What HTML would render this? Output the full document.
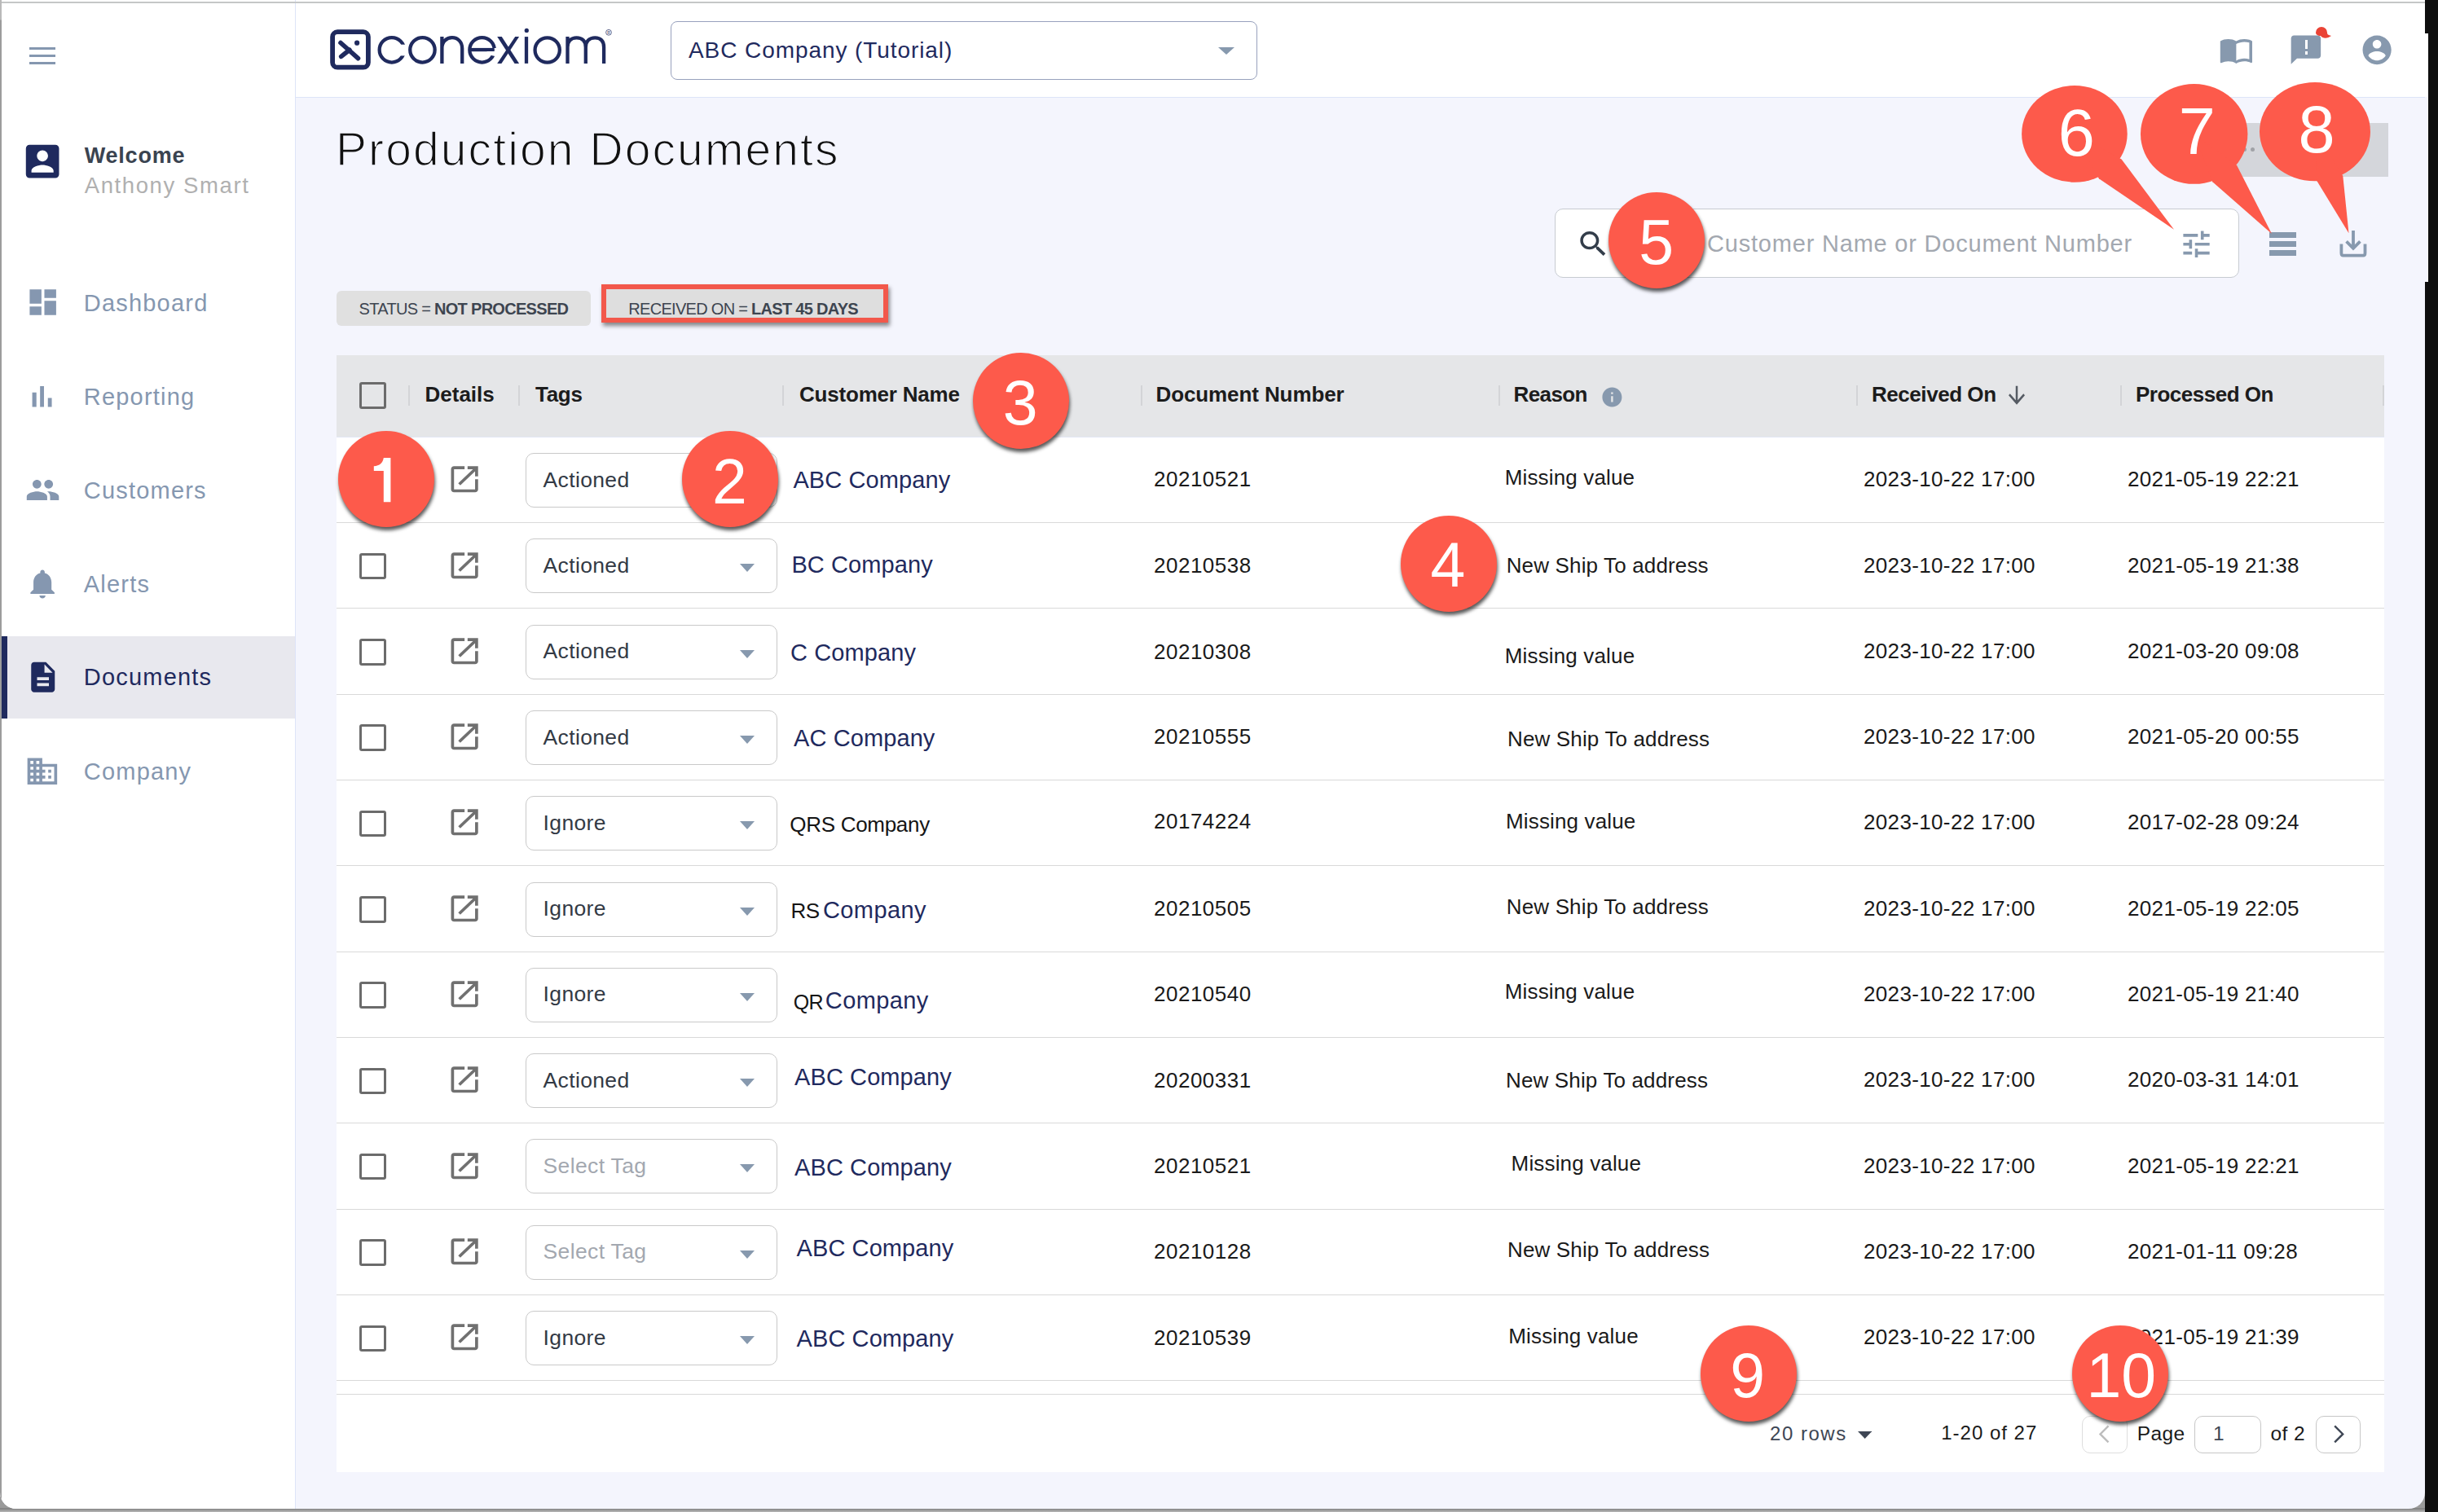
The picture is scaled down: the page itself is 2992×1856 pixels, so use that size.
<!DOCTYPE html>
<html><head><meta charset="utf-8"><style>
html,body{margin:0;padding:0;width:2992px;height:1856px;overflow:hidden;background:#0e0e0e}
body{position:relative;font-family:"Liberation Sans", sans-serif}
.t{position:absolute;white-space:nowrap;line-height:1}
svg{display:block}
#win{position:absolute;left:0;top:0;width:2976px;height:1852px;background:#f4f5fd;border-radius:0 0 20px 20px;overflow:hidden}
</style></head><body>
<div style="position:absolute;left:0;top:1820px;width:2976px;height:36px;background:linear-gradient(#9a9a9a 0%,#9a9a9a 85%,#7f7f7f 88%,#b8b8b8 100%)"></div>
<div style="position:absolute;left:2976px;top:41px;width:4px;height:305px;background:#fff"></div>
<div style="position:absolute;left:2976px;top:119px;width:3px;height:227px;background:#f4f5fd"></div>
<div id="win">
<div style="position:absolute;left:362.0px;top:0.0px;width:2614.0px;height:119.0px;background:#fff;border-bottom:1.2px solid #dde4f8"></div><div style="position:absolute;left:0.0px;top:0.0px;width:362.0px;height:1852.0px;background:#fff;border-right:1.2px solid #dde4f8"></div><div style="position:absolute;left:2.0px;top:2.0px;width:2974.0px;height:2.0px;background:#c5c7c7"></div><div style="position:absolute;left:0.0px;top:0.0px;width:2.0px;height:1852.0px;background:linear-gradient(#b9b9b9 0px,#b9b9b9 24px,#9c9c9c 25px,#9c9c9c 100%)"></div><div style="position:absolute;left:36.0px;top:58.0px;width:32.4px;height:3.0px;background:#8597b0"></div><div style="position:absolute;left:36.0px;top:67.0px;width:32.4px;height:3.0px;background:#8597b0"></div><div style="position:absolute;left:36.0px;top:76.0px;width:32.4px;height:3.0px;background:#8597b0"></div><svg style="position:absolute;left:25.22px;top:171.22px;overflow:visible" width="54.27" height="54.27" viewBox="0 0 24 24" preserveAspectRatio="none"><path fill="#1f2a5e" d="M3 5v14c0 1.1.89 2 2 2h14c1.1 0 2-.9 2-2V5c0-1.1-.9-2-2-2H5c-1.11 0-2 .9-2 2zm12 4c0 1.66-1.34 3-3 3s-3-1.34-3-3 1.34-3 3-3 3 1.34 3 3zm-9 8c0-2 4-3.1 6-3.1s6 1.1 6 3.1v1H6v-1z"/></svg><div class="t" style="left:103.7px;top:177.7px;font-size:27px;color:#3a4350;font-weight:700;letter-spacing:0.8px;">Welcome</div><div class="t" style="left:103.7px;top:213.7px;font-size:27.5px;color:#b0b0b0;font-weight:400;letter-spacing:1.6px;">Anthony Smart</div><div style="position:absolute;left:2.0px;top:781.0px;width:360.0px;height:101.0px;background:#e8e8ee"></div><div style="position:absolute;left:2.0px;top:781.0px;width:7.0px;height:101.0px;background:#1f2a5e"></div><svg style="position:absolute;left:30.58px;top:350.37px;overflow:visible" width="43.33" height="41.87" viewBox="0 0 24 24" preserveAspectRatio="none"><path fill="#8597b0" d="M3 13h8V3H3v10zm0 8h8v-6H3v6zm10 0h8V11h-8v10zm0-18v6h8V3h-8z"/></svg><div class="t" style="left:102.8px;top:358.0px;font-size:29px;color:#8597b0;font-weight:400;letter-spacing:1.2px;">Dashboard</div><svg style="position:absolute;left:31.43px;top:464.53px;overflow:visible" width="41.14" height="43.54" viewBox="0 0 24 24" preserveAspectRatio="none"><path fill="#8597b0" d="M5 9.2h3V19H5zM10.6 5h2.8v14h-2.8zm5.6 8H19v6h-2.8z"/></svg><div class="t" style="left:102.8px;top:473.3px;font-size:29px;color:#8597b0;font-weight:400;letter-spacing:1.2px;">Reporting</div><svg style="position:absolute;left:30.70px;top:580.07px;overflow:visible" width="43.09" height="42.86" viewBox="0 0 24 24" preserveAspectRatio="none"><path fill="#8597b0" d="M16 11c1.66 0 2.99-1.34 2.99-3S17.66 5 16 5c-1.66 0-3 1.34-3 3s1.34 3 3 3zm-8 0c1.66 0 2.99-1.34 2.99-3S9.66 5 8 5C6.34 5 5 6.34 5 8s1.34 3 3 3zm0 2c-2.33 0-7 1.17-7 3.5V19h14v-2.5c0-2.33-4.67-3.5-7-3.5zm8 0c-.29 0-.62.02-.97.05 1.16.84 1.970 1.97 1.97 3.45V19h6v-2.5c0-2.33-4.67-3.5-7-3.5z"/></svg><div class="t" style="left:102.8px;top:588.1px;font-size:29px;color:#8597b0;font-weight:400;letter-spacing:1.2px;">Customers</div><svg style="position:absolute;left:30.12px;top:694.51px;overflow:visible" width="44.25" height="43.08" viewBox="0 0 24 24" preserveAspectRatio="none"><path fill="#8597b0" d="M12 22c1.1 0 2-.9 2-2h-4c0 1.1.89 2 2 2zm6-6v-5c0-3.07-1.64-5.64-4.5-6.32V4c0-.83-.67-1.5-1.5-1.5s-1.5.67-1.5 1.5v.68C7.63 5.36 6 7.92 6 11v5l-2 2v1h16v-1l-2-2z"/></svg><div class="t" style="left:102.8px;top:702.5px;font-size:29px;color:#8597b0;font-weight:400;letter-spacing:1.2px;">Alerts</div><svg style="position:absolute;left:30.75px;top:809.30px;overflow:visible" width="43.50" height="44.40" viewBox="0 0 24 24" preserveAspectRatio="none"><path fill="#1f2a5e" d="M14 2H6c-1.1 0-1.99.9-1.99 2L4 20c0 1.1.89 2 1.99 2H18c1.1 0 2-.9 2-2V8l-6-6zm2 16H8v-2h8v2zm0-4H8v-2h8v2zm-3-5V3.5L18.5 9H13z"/></svg><div class="t" style="left:102.8px;top:817.2px;font-size:29px;color:#1f2a5e;font-weight:400;letter-spacing:1.2px;">Documents</div><svg style="position:absolute;left:30.35px;top:925.08px;overflow:visible" width="43.80" height="43.33" viewBox="0 0 24 24" preserveAspectRatio="none"><path fill="#8597b0" d="M12 7V3H2v18h20V7H12zM6 19H4v-2h2v2zm0-4H4v-2h2v2zm0-4H4V9h2v2zm0-4H4V5h2v2zm4 12H8v-2h2v2zm0-4H8v-2h2v2zm0-4H8V9h2v2zm0-4H8V5h2v2zm10 12h-8v-2h2v-2h-2v-2h2v-2h-2V9h8v10zm-2-8h-2v2h2v-2zm0 4h-2v2h2v-2z"/></svg><div class="t" style="left:102.8px;top:933.0px;font-size:29px;color:#8597b0;font-weight:400;letter-spacing:1.2px;">Company</div><svg style="position:absolute;left:400px;top:30px" width="360" height="60" viewBox="400 30 360 60">
<g fill="none" stroke="#1f2a5e">
<rect x="408.1" y="39.2" width="43.8" height="43.5" rx="6" stroke-width="5.8"/>
<g stroke-linecap="round" stroke-width="5.6"><line x1="418" y1="52.5" x2="439.5" y2="71.7"/><line x1="418.7" y1="69.4" x2="428.9" y2="61.2"/></g>
<g stroke-width="4.3">
<circle cx="480.85" cy="61.35" r="15.2"/>
<circle cx="518.45" cy="61.35" r="15.2"/>
<path d="M542.4 78 V45.1 M542.4 59 C542.4 51 548 46.2 554.9 46.2 C562 46.2 567.2 51.5 567.2 59.5 V78"/>
<circle cx="591.55" cy="61.35" r="15.2"/>
<path d="M576 61.05 H607"/>
<path d="M646 45.1 V77.9"/>
<circle cx="671.7" cy="61.5" r="15.15"/>
<path d="M696.5 77.9 V45.1 M696.5 58 C696.5 50.5 701 46.3 707.6 46.3 C714.5 46.3 718.8 50.5 718.8 58 V77.9 M718.8 58 C718.8 50.5 723.5 46.3 730.3 46.3 C737 46.3 741.1 50.5 741.1 58 V77.9"/>
</g></g>
<rect x="489" y="54.7" width="12" height="13.7" fill="#fff"/>
<path d="M597 62.9 H612 V70 L603 68 Z" fill="#fff"/>
<rect x="606" y="59" width="4" height="4" fill="#fff"/>
<path d="M576.5 59.2 H606.8 V62.9 H576.5Z" fill="#1f2a5e"/>
<g fill="#1f2a5e">
<path d="M610.2 45.1 H615.75 L637.1 77.9 H631.6Z"/>
<path d="M632.2 45.1 H637.1 L615.4 77.9 H610.2Z"/>
<circle cx="438.1" cy="52.7" r="3.1"/>
<circle cx="646.3" cy="37.4" r="2.6"/>
</g>
<circle cx="747" cy="39.8" r="3.4" fill="none" stroke="#1f2a5e" stroke-width="0.7"/>
<text x="747" y="41.6" font-size="5" text-anchor="middle" fill="#1f2a5e" font-family="Liberation Sans">R</text>
</svg><div style="position:absolute;left:823.0px;top:26.0px;width:720.0px;height:71.5px;box-sizing:border-box;background:#fff;border:1.5px solid #98a1bd;border-radius:8px"></div><div class="t" style="left:845.0px;top:48.1px;font-size:28px;color:#1f2a5e;font-weight:400;letter-spacing:0.92px;">ABC Company (Tutorial)</div><svg style="position:absolute;left:1495px;top:58px" width="20" height="9" viewBox="0 0 20 9"><path d="M0 0H20L10 9z" fill="#8799ae"/></svg><svg style="position:absolute;left:2723.02px;top:40.06px;overflow:visible" width="42.76" height="42.35" viewBox="0 0 24 24" preserveAspectRatio="none"><path fill="#8799ae" d="M21 5c-1.11-.35-2.33-.5-3.5-.5-1.95 0-4.050.4-5.5 1.5-1.45-1.1-3.55-1.5-5.5-1.5S2.45 4.9 1 6v14.65c0 .25.25.5.5.5.1 0 .15-.05.25-.05C3.1 20.45 5.05 20 6.5 20c1.95 0 4.05.4 5.5 1.5 1.35-.85 3.8-1.5 5.5-1.5 1.65 0 3.35.3 4.75 1.05.1.05.15.05.25.05.25 0 .5-.25.5-.5V6c-.6-.45-1.25-.75-2-1zm0 13.5c-1.1-.35-2.3-.5-3.5-.5-1.7 0-4.15.65-5.5 1.5V8c1.35-.85 3.8-1.5 5.5-1.5 1.2 0 2.4.15 3.5.5v11.5z"/></svg><svg style="position:absolute;left:2808.35px;top:39.87px;overflow:visible" width="43.80" height="42.36" viewBox="0 0 24 24" preserveAspectRatio="none"><path fill="#8799ae" d="M20 2H4c-1.1 0-1.99.9-1.99 2L2 22l4-4h14c1.1 0 2-.9 2-2V4c0-1.1-.9-2-2-2zm-7 12h-2v-2h2v2zm0-4h-2V6h2v4z"/></svg><div style="position:absolute;left:2826.0px;top:48.0px;width:9.0px;height:20.0px;background:#8799ae"></div><div style="position:absolute;left:2828.8px;top:49.3px;width:3.7px;height:10.8px;background:#fff"></div><div style="position:absolute;left:2828.8px;top:63.0px;width:3.7px;height:3.7px;background:#fff"></div><svg style="position:absolute;left:2838px;top:31.5px" width="24" height="22" viewBox="0 0 24 22"><path fill="#ea4335" d="M4 8a7 7 0 0 1 14 0 c0 2 1 3 5 4 c-4 3 -10 4 -13 0 c-4 0 -6 -2 -6 -4z"/></svg><svg style="position:absolute;left:2896.28px;top:40.14px;overflow:visible" width="42.24" height="42.72" viewBox="0 0 24 24" preserveAspectRatio="none"><path fill="#8799ae" d="M12 2C6.48 2 2 6.48 2 12s4.48 10 10 10 10-4.48 10-10S17.52 2 12 2zm0 3c1.66 0 3 1.34 3 3s-1.34 3-3 3-3-1.34-3-3 1.34-3 3-3zm0 14.2c-2.5 0-4.71-1.28-6-3.22.03-1.99 4-3.08 6-3.08 1.99 0 5.97 1.09 6 3.08-1.29 1.94-3.5 3.22-6 3.22z"/></svg><div class="t" style="left:412.0px;top:154.7px;font-size:57px;color:#111;font-weight:400;letter-spacing:2.1px;-webkit-text-stroke:1.5px #f4f5fd">Production Documents</div><div style="position:absolute;left:2745.0px;top:151.0px;width:186.0px;height:66.0px;background:#d4d6db"></div><div style="position:absolute;left:2752px;top:181px;width:5px;height:5px;border-radius:50%;background:#a0a2a7"></div><div style="position:absolute;left:2762px;top:181px;width:5px;height:5px;border-radius:50%;background:#a0a2a7"></div><div style="position:absolute;left:1908.4px;top:255.8px;width:840.0px;height:85.7px;box-sizing:border-box;background:#fff;border:1.5px solid #c7cbd1;border-radius:10px"></div><svg style="position:absolute;left:1933.68px;top:278.89px;overflow:visible" width="42.54" height="40.89" viewBox="0 0 24 24" preserveAspectRatio="none"><path fill="#333d4a" d="M15.5 14h-.79l-.28-.27C15.41 12.59 16 11.11 16 9.5 16 5.91 13.09 3 9.5 3S3 5.91 3 9.5 5.91 16 9.5 16c1.61 0 3.090-.59 4.23-1.57l.27.28v.79l5 4.99L20.49 19l-4.99-5zm-6 0C7.01 14 5 11.99 5 9.5S7.01 5 9.5 5 14 7.01 14 9.5 11.99 14 9.5 14z"/></svg><div class="t" style="left:2095.0px;top:284.5px;font-size:29px;color:#a3a8b0;font-weight:400;letter-spacing:0.8px;">Customer Name or Document Number</div><svg style="position:absolute;left:2673.82px;top:277.57px;overflow:visible" width="43.07" height="43.47" viewBox="0 0 24 24" preserveAspectRatio="none"><path fill="#8799ae" d="M3 17v2h6v-2H3zM3 5v2h10V5H3zm10 16v-2h8v-2h-8v-2h-2v6h2zM7 9v2H3v2h4v2h2V9H7zm14 4v-2H11v2h10zm-6-4h2V7h4V5h-4V3h-2v6z"/></svg><div style="position:absolute;left:2785.0px;top:285.2px;width:32.6px;height:6.7px;background:#8799ae"></div><div style="position:absolute;left:2785.0px;top:296.0px;width:32.6px;height:6.7px;background:#8799ae"></div><div style="position:absolute;left:2785.0px;top:307.0px;width:32.6px;height:6.7px;background:#8799ae"></div><svg style="position:absolute;left:2868px;top:280px" width="40" height="40" viewBox="2868 280 40 40"><g fill="none" stroke="#8799ae" stroke-width="3.8"><path d="M2888 283 V303.5"/><path d="M2879.6 296.4 L2888 304.8 L2896.4 296.4"/><path d="M2873.4 299.5 V310.5 Q2873.4 313.7 2875.6 313.7 H2900.3 Q2902.5 313.7 2902.5 310.5 V299.5"/></g></svg><div style="position:absolute;left:413.0px;top:357.0px;width:311.8px;height:43.0px;background:#e0e0e0;border-radius:6px"></div><div class="t" style="left:440.6px;top:368.7px;font-size:20px;color:#3d4550;font-weight:400;letter-spacing:-0.7px;">STATUS = <b>NOT PROCESSED</b></div><div style="position:absolute;left:738.0px;top:349.4px;width:351.7px;height:46.8px;box-sizing:border-box;background:#dedede;border:6px solid #f2584b;box-shadow:2px 4px 5px rgba(0,0,0,0.45)"></div><div class="t" style="left:771.3px;top:368.7px;font-size:20px;color:#3d4550;font-weight:400;letter-spacing:-0.7px;">RECEIVED ON = <b>LAST 45 DAYS</b></div><div style="position:absolute;left:413.0px;top:436.0px;width:2513.0px;height:1371.0px;background:#fff"></div><div style="position:absolute;left:413.0px;top:436.0px;width:2513.0px;height:101.0px;background:#e5e6e8"></div><div style="position:absolute;left:413.0px;top:536.0px;width:2513.0px;height:1.0px;background:#e2e6f4"></div><div style="position:absolute;left:441.0px;top:469.0px;width:32.5px;height:32.5px;box-sizing:border-box;border:3.6px solid #6b6b6b;border-radius:3px"></div><div style="position:absolute;left:500.7px;top:473.0px;width:2.0px;height:25.0px;background:#d3d4d7"></div><div style="position:absolute;left:636.0px;top:473.0px;width:2.0px;height:25.0px;background:#d3d4d7"></div><div style="position:absolute;left:960.0px;top:473.0px;width:2.0px;height:25.0px;background:#d3d4d7"></div><div style="position:absolute;left:1399.5px;top:473.0px;width:2.0px;height:25.0px;background:#d3d4d7"></div><div style="position:absolute;left:1839.0px;top:473.0px;width:2.0px;height:25.0px;background:#d3d4d7"></div><div style="position:absolute;left:2277.5px;top:473.0px;width:2.0px;height:25.0px;background:#d3d4d7"></div><div style="position:absolute;left:2602.4px;top:473.0px;width:2.0px;height:25.0px;background:#d3d4d7"></div><div style="position:absolute;left:2924.0px;top:473.0px;width:2.0px;height:25.0px;background:#d3d4d7"></div><div class="t" style="left:521.5px;top:471.4px;font-size:26px;color:#1c1c1c;font-weight:700;letter-spacing:0px;">Details</div><div class="t" style="left:657.0px;top:471.4px;font-size:26px;color:#1c1c1c;font-weight:700;letter-spacing:-0.3px;">Tags</div><div class="t" style="left:981.0px;top:471.4px;font-size:26px;color:#1c1c1c;font-weight:700;letter-spacing:-0.2px;">Customer Name</div><div class="t" style="left:1418.5px;top:471.4px;font-size:26px;color:#1c1c1c;font-weight:700;letter-spacing:-0.1px;">Document Number</div><div class="t" style="left:1857.5px;top:471.4px;font-size:26px;color:#1c1c1c;font-weight:700;letter-spacing:-0.6px;">Reason</div><div class="t" style="left:2297.0px;top:471.4px;font-size:26px;color:#1c1c1c;font-weight:700;letter-spacing:-0.45px;">Received On</div><div class="t" style="left:2621.0px;top:471.4px;font-size:26px;color:#1c1c1c;font-weight:700;letter-spacing:-0.5px;">Processed On</div><svg style="position:absolute;left:1963.60px;top:472.60px;overflow:visible" width="28.80" height="28.80" viewBox="0 0 24 24" preserveAspectRatio="none"><path fill="#8799ae" d="M12 2C6.48 2 2 6.48 2 12s4.48 10 10 10 10-4.48 10-10S17.52 2 12 2zm1 15h-2v-6h2v6zm0-8h-2V7h2v2z"/></svg><svg style="position:absolute;left:2460.00px;top:468.25px;overflow:visible" width="30.00" height="34.50" viewBox="0 0 24 24" preserveAspectRatio="none"><path fill="#555b63" d="M20 12l-1.41-1.41L13 16.17V4h-2v12.17l-5.58-5.59L4 12l8 8 8-8z"/></svg><div style="position:absolute;left:413.0px;top:641.0px;width:2513.0px;height:1.0px;background:#d9d9d9"></div><div style="position:absolute;left:441.0px;top:573.5px;width:32.5px;height:32.5px;box-sizing:border-box;border:3.6px solid #6b6b6b;border-radius:3px"></div><svg style="position:absolute;left:548.27px;top:567.27px;overflow:visible" width="44.27" height="42.67" viewBox="0 0 24 24" preserveAspectRatio="none"><path fill="#707070" d="M19 19H5V5h7V3H5c-1.11 0-2 .9-2 2v14c0 1.1.89 2 2 2h14c1.1 0 2-.9 2-2v-7h-2v7zM14 3v2h3.59l-9.83 9.830 1.41 1.41L19 6.41V10h2V3h-7z"/></svg><div style="position:absolute;left:645.0px;top:556.0px;width:308.7px;height:67.0px;box-sizing:border-box;background:#fff;border:1.5px solid #c9c9c9;border-radius:10px"></div><div class="t" style="left:666.6px;top:575.6px;font-size:26.5px;color:#333a45;font-weight:400;letter-spacing:0.35px;">Actioned</div><svg style="position:absolute;left:907.8px;top:587.0px" width="18" height="10" viewBox="0 0 18 10"><path d="M0 0H18L9 10z" fill="#8799ae"/></svg><div class="t" style="left:973.4px;top:574.5px;font-size:29px;color:#1f2a5e;font-weight:400;letter-spacing:0.1px;">ABC Company</div><div class="t" style="left:1416.0px;top:574.7px;font-size:26px;color:#1a1a1a;font-weight:400;letter-spacing:0.5px;">20210521</div><div class="t" style="left:1846.7px;top:573.2px;font-size:26px;color:#1a1a1a;font-weight:400;letter-spacing:0.15px;">Missing value</div><div class="t" style="left:2287.0px;top:575.2px;font-size:26px;color:#1a1a1a;font-weight:400;letter-spacing:0.35px;">2023-10-22 17:00</div><div class="t" style="left:2611.0px;top:575.2px;font-size:26px;color:#1a1a1a;font-weight:400;letter-spacing:0.35px;">2021-05-19 22:21</div><div style="position:absolute;left:413.0px;top:746.0px;width:2513.0px;height:1.0px;background:#d9d9d9"></div><div style="position:absolute;left:441.0px;top:678.8px;width:32.5px;height:32.5px;box-sizing:border-box;border:3.6px solid #6b6b6b;border-radius:3px"></div><svg style="position:absolute;left:548.27px;top:672.57px;overflow:visible" width="44.27" height="42.67" viewBox="0 0 24 24" preserveAspectRatio="none"><path fill="#707070" d="M19 19H5V5h7V3H5c-1.11 0-2 .9-2 2v14c0 1.1.89 2 2 2h14c1.1 0 2-.9 2-2v-7h-2v7zM14 3v2h3.59l-9.83 9.830 1.41 1.41L19 6.41V10h2V3h-7z"/></svg><div style="position:absolute;left:645.0px;top:661.3px;width:308.7px;height:67.0px;box-sizing:border-box;background:#fff;border:1.5px solid #c9c9c9;border-radius:10px"></div><div class="t" style="left:666.6px;top:680.9px;font-size:26.5px;color:#333a45;font-weight:400;letter-spacing:0.35px;">Actioned</div><svg style="position:absolute;left:907.8px;top:692.3px" width="18" height="10" viewBox="0 0 18 10"><path d="M0 0H18L9 10z" fill="#8799ae"/></svg><div class="t" style="left:971.4px;top:679.3px;font-size:29px;color:#1f2a5e;font-weight:400;letter-spacing:0.1px;">BC Company</div><div class="t" style="left:1416.0px;top:680.5px;font-size:26px;color:#1a1a1a;font-weight:400;letter-spacing:0.5px;">20210538</div><div class="t" style="left:1848.7px;top:680.5px;font-size:26px;color:#1a1a1a;font-weight:400;letter-spacing:0.15px;">New Ship To address</div><div class="t" style="left:2287.0px;top:680.5px;font-size:26px;color:#1a1a1a;font-weight:400;letter-spacing:0.35px;">2023-10-22 17:00</div><div class="t" style="left:2611.0px;top:680.5px;font-size:26px;color:#1a1a1a;font-weight:400;letter-spacing:0.35px;">2021-05-19 21:38</div><div style="position:absolute;left:413.0px;top:852.0px;width:2513.0px;height:1.0px;background:#d9d9d9"></div><div style="position:absolute;left:441.0px;top:784.1px;width:32.5px;height:32.5px;box-sizing:border-box;border:3.6px solid #6b6b6b;border-radius:3px"></div><svg style="position:absolute;left:548.27px;top:777.87px;overflow:visible" width="44.27" height="42.67" viewBox="0 0 24 24" preserveAspectRatio="none"><path fill="#707070" d="M19 19H5V5h7V3H5c-1.11 0-2 .9-2 2v14c0 1.1.89 2 2 2h14c1.1 0 2-.9 2-2v-7h-2v7zM14 3v2h3.59l-9.83 9.830 1.41 1.41L19 6.41V10h2V3h-7z"/></svg><div style="position:absolute;left:645.0px;top:766.6px;width:308.7px;height:67.0px;box-sizing:border-box;background:#fff;border:1.5px solid #c9c9c9;border-radius:10px"></div><div class="t" style="left:666.6px;top:786.2px;font-size:26.5px;color:#333a45;font-weight:400;letter-spacing:0.35px;">Actioned</div><svg style="position:absolute;left:907.8px;top:797.6px" width="18" height="10" viewBox="0 0 18 10"><path d="M0 0H18L9 10z" fill="#8799ae"/></svg><div class="t" style="left:970.0px;top:786.8px;font-size:29px;color:#1f2a5e;font-weight:400;letter-spacing:0.1px;">C Company</div><div class="t" style="left:1416.0px;top:787.3px;font-size:26px;color:#1a1a1a;font-weight:400;letter-spacing:0.5px;">20210308</div><div class="t" style="left:1846.8px;top:791.8px;font-size:26px;color:#1a1a1a;font-weight:400;letter-spacing:0.15px;">Missing value</div><div class="t" style="left:2287.0px;top:785.8px;font-size:26px;color:#1a1a1a;font-weight:400;letter-spacing:0.35px;">2023-10-22 17:00</div><div class="t" style="left:2611.0px;top:785.8px;font-size:26px;color:#1a1a1a;font-weight:400;letter-spacing:0.35px;">2021-03-20 09:08</div><div style="position:absolute;left:413.0px;top:957.0px;width:2513.0px;height:1.0px;background:#d9d9d9"></div><div style="position:absolute;left:441.0px;top:889.4px;width:32.5px;height:32.5px;box-sizing:border-box;border:3.6px solid #6b6b6b;border-radius:3px"></div><svg style="position:absolute;left:548.27px;top:883.17px;overflow:visible" width="44.27" height="42.67" viewBox="0 0 24 24" preserveAspectRatio="none"><path fill="#707070" d="M19 19H5V5h7V3H5c-1.11 0-2 .9-2 2v14c0 1.1.89 2 2 2h14c1.1 0 2-.9 2-2v-7h-2v7zM14 3v2h3.59l-9.83 9.830 1.41 1.41L19 6.41V10h2V3h-7z"/></svg><div style="position:absolute;left:645.0px;top:871.9px;width:308.7px;height:67.0px;box-sizing:border-box;background:#fff;border:1.5px solid #c9c9c9;border-radius:10px"></div><div class="t" style="left:666.6px;top:891.5px;font-size:26.5px;color:#333a45;font-weight:400;letter-spacing:0.35px;">Actioned</div><svg style="position:absolute;left:907.8px;top:902.9px" width="18" height="10" viewBox="0 0 18 10"><path d="M0 0H18L9 10z" fill="#8799ae"/></svg><div class="t" style="left:974.0px;top:891.9px;font-size:29px;color:#1f2a5e;font-weight:400;letter-spacing:0.1px;">AC Company</div><div class="t" style="left:1416.0px;top:891.1px;font-size:26px;color:#1a1a1a;font-weight:400;letter-spacing:0.5px;">20210555</div><div class="t" style="left:1850.0px;top:894.1px;font-size:26px;color:#1a1a1a;font-weight:400;letter-spacing:0.15px;">New Ship To address</div><div class="t" style="left:2287.0px;top:891.1px;font-size:26px;color:#1a1a1a;font-weight:400;letter-spacing:0.35px;">2023-10-22 17:00</div><div class="t" style="left:2611.0px;top:891.1px;font-size:26px;color:#1a1a1a;font-weight:400;letter-spacing:0.35px;">2021-05-20 00:55</div><div style="position:absolute;left:413.0px;top:1062.0px;width:2513.0px;height:1.0px;background:#d9d9d9"></div><div style="position:absolute;left:441.0px;top:994.7px;width:32.5px;height:32.5px;box-sizing:border-box;border:3.6px solid #6b6b6b;border-radius:3px"></div><svg style="position:absolute;left:548.27px;top:988.47px;overflow:visible" width="44.27" height="42.67" viewBox="0 0 24 24" preserveAspectRatio="none"><path fill="#707070" d="M19 19H5V5h7V3H5c-1.11 0-2 .9-2 2v14c0 1.1.89 2 2 2h14c1.1 0 2-.9 2-2v-7h-2v7zM14 3v2h3.59l-9.83 9.830 1.41 1.41L19 6.41V10h2V3h-7z"/></svg><div style="position:absolute;left:645.0px;top:977.2px;width:308.7px;height:67.0px;box-sizing:border-box;background:#fff;border:1.5px solid #c9c9c9;border-radius:10px"></div><div class="t" style="left:666.6px;top:996.8px;font-size:26.5px;color:#333a45;font-weight:400;letter-spacing:0.35px;">Ignore</div><svg style="position:absolute;left:907.8px;top:1008.2px" width="18" height="10" viewBox="0 0 18 10"><path d="M0 0H18L9 10z" fill="#8799ae"/></svg><div class="t" style="left:969.3px;top:999.0px;font-size:26px;color:#151515;font-weight:400;letter-spacing:-0.3px;">QRS Company</div><div class="t" style="left:1416.0px;top:995.0px;font-size:26px;color:#1a1a1a;font-weight:400;letter-spacing:0.5px;">20174224</div><div class="t" style="left:1848.0px;top:995.0px;font-size:26px;color:#1a1a1a;font-weight:400;letter-spacing:0.15px;">Missing value</div><div class="t" style="left:2287.0px;top:996.4px;font-size:26px;color:#1a1a1a;font-weight:400;letter-spacing:0.35px;">2023-10-22 17:00</div><div class="t" style="left:2611.0px;top:996.4px;font-size:26px;color:#1a1a1a;font-weight:400;letter-spacing:0.35px;">2017-02-28 09:24</div><div style="position:absolute;left:413.0px;top:1168.0px;width:2513.0px;height:1.0px;background:#d9d9d9"></div><div style="position:absolute;left:441.0px;top:1100.0px;width:32.5px;height:32.5px;box-sizing:border-box;border:3.6px solid #6b6b6b;border-radius:3px"></div><svg style="position:absolute;left:548.27px;top:1093.77px;overflow:visible" width="44.27" height="42.67" viewBox="0 0 24 24" preserveAspectRatio="none"><path fill="#707070" d="M19 19H5V5h7V3H5c-1.11 0-2 .9-2 2v14c0 1.1.89 2 2 2h14c1.1 0 2-.9 2-2v-7h-2v7zM14 3v2h3.59l-9.83 9.830 1.41 1.41L19 6.41V10h2V3h-7z"/></svg><div style="position:absolute;left:645.0px;top:1082.5px;width:308.7px;height:67.0px;box-sizing:border-box;background:#fff;border:1.5px solid #c9c9c9;border-radius:10px"></div><div class="t" style="left:666.6px;top:1102.1px;font-size:26.5px;color:#333a45;font-weight:400;letter-spacing:0.35px;">Ignore</div><svg style="position:absolute;left:907.8px;top:1113.5px" width="18" height="10" viewBox="0 0 18 10"><path d="M0 0H18L9 10z" fill="#8799ae"/></svg><div class="t" style="left:970.5px;top:1105.1px;font-size:26px;color:#151515;font-weight:400;letter-spacing:-0.5px;">RS</div><div class="t" style="left:1010.0px;top:1102.6px;font-size:29px;color:#1f2a5e;font-weight:400;letter-spacing:0.4px;">Company</div><div class="t" style="left:1416.0px;top:1101.7px;font-size:26px;color:#1a1a1a;font-weight:400;letter-spacing:0.5px;">20210505</div><div class="t" style="left:1848.8px;top:1099.7px;font-size:26px;color:#1a1a1a;font-weight:400;letter-spacing:0.15px;">New Ship To address</div><div class="t" style="left:2287.0px;top:1101.7px;font-size:26px;color:#1a1a1a;font-weight:400;letter-spacing:0.35px;">2023-10-22 17:00</div><div class="t" style="left:2611.0px;top:1101.7px;font-size:26px;color:#1a1a1a;font-weight:400;letter-spacing:0.35px;">2021-05-19 22:05</div><div style="position:absolute;left:413.0px;top:1273.0px;width:2513.0px;height:1.0px;background:#d9d9d9"></div><div style="position:absolute;left:441.0px;top:1205.3px;width:32.5px;height:32.5px;box-sizing:border-box;border:3.6px solid #6b6b6b;border-radius:3px"></div><svg style="position:absolute;left:548.27px;top:1199.07px;overflow:visible" width="44.27" height="42.67" viewBox="0 0 24 24" preserveAspectRatio="none"><path fill="#707070" d="M19 19H5V5h7V3H5c-1.11 0-2 .9-2 2v14c0 1.1.89 2 2 2h14c1.1 0 2-.9 2-2v-7h-2v7zM14 3v2h3.59l-9.83 9.830 1.41 1.41L19 6.41V10h2V3h-7z"/></svg><div style="position:absolute;left:645.0px;top:1187.8px;width:308.7px;height:67.0px;box-sizing:border-box;background:#fff;border:1.5px solid #c9c9c9;border-radius:10px"></div><div class="t" style="left:666.6px;top:1207.4px;font-size:26.5px;color:#333a45;font-weight:400;letter-spacing:0.35px;">Ignore</div><svg style="position:absolute;left:907.8px;top:1218.8px" width="18" height="10" viewBox="0 0 18 10"><path d="M0 0H18L9 10z" fill="#8799ae"/></svg><div class="t" style="left:973.8px;top:1217.6px;font-size:25px;color:#151515;font-weight:400;letter-spacing:-0.8px;">QR</div><div class="t" style="left:1012.8px;top:1214.3px;font-size:29px;color:#1f2a5e;font-weight:400;letter-spacing:0.4px;">Company</div><div class="t" style="left:1416.0px;top:1207.0px;font-size:26px;color:#1a1a1a;font-weight:400;letter-spacing:0.5px;">20210540</div><div class="t" style="left:1846.8px;top:1204.0px;font-size:26px;color:#1a1a1a;font-weight:400;letter-spacing:0.15px;">Missing value</div><div class="t" style="left:2287.0px;top:1207.0px;font-size:26px;color:#1a1a1a;font-weight:400;letter-spacing:0.35px;">2023-10-22 17:00</div><div class="t" style="left:2611.0px;top:1207.0px;font-size:26px;color:#1a1a1a;font-weight:400;letter-spacing:0.35px;">2021-05-19 21:40</div><div style="position:absolute;left:413.0px;top:1378.0px;width:2513.0px;height:1.0px;background:#d9d9d9"></div><div style="position:absolute;left:441.0px;top:1310.6px;width:32.5px;height:32.5px;box-sizing:border-box;border:3.6px solid #6b6b6b;border-radius:3px"></div><svg style="position:absolute;left:548.27px;top:1304.37px;overflow:visible" width="44.27" height="42.67" viewBox="0 0 24 24" preserveAspectRatio="none"><path fill="#707070" d="M19 19H5V5h7V3H5c-1.11 0-2 .9-2 2v14c0 1.1.89 2 2 2h14c1.1 0 2-.9 2-2v-7h-2v7zM14 3v2h3.59l-9.83 9.830 1.41 1.41L19 6.41V10h2V3h-7z"/></svg><div style="position:absolute;left:645.0px;top:1293.1px;width:308.7px;height:67.0px;box-sizing:border-box;background:#fff;border:1.5px solid #c9c9c9;border-radius:10px"></div><div class="t" style="left:666.6px;top:1312.7px;font-size:26.5px;color:#333a45;font-weight:400;letter-spacing:0.35px;">Actioned</div><svg style="position:absolute;left:907.8px;top:1324.1px" width="18" height="10" viewBox="0 0 18 10"><path d="M0 0H18L9 10z" fill="#8799ae"/></svg><div class="t" style="left:975.0px;top:1308.1px;font-size:29px;color:#1f2a5e;font-weight:400;letter-spacing:0.1px;">ABC Company</div><div class="t" style="left:1416.0px;top:1313.1px;font-size:26px;color:#1a1a1a;font-weight:400;letter-spacing:0.5px;">20200331</div><div class="t" style="left:1848.0px;top:1313.1px;font-size:26px;color:#1a1a1a;font-weight:400;letter-spacing:0.15px;">New Ship To address</div><div class="t" style="left:2287.0px;top:1312.3px;font-size:26px;color:#1a1a1a;font-weight:400;letter-spacing:0.35px;">2023-10-22 17:00</div><div class="t" style="left:2611.0px;top:1312.3px;font-size:26px;color:#1a1a1a;font-weight:400;letter-spacing:0.35px;">2020-03-31 14:01</div><div style="position:absolute;left:413.0px;top:1484.0px;width:2513.0px;height:1.0px;background:#d9d9d9"></div><div style="position:absolute;left:441.0px;top:1415.9px;width:32.5px;height:32.5px;box-sizing:border-box;border:3.6px solid #6b6b6b;border-radius:3px"></div><svg style="position:absolute;left:548.27px;top:1409.67px;overflow:visible" width="44.27" height="42.67" viewBox="0 0 24 24" preserveAspectRatio="none"><path fill="#707070" d="M19 19H5V5h7V3H5c-1.11 0-2 .9-2 2v14c0 1.1.89 2 2 2h14c1.1 0 2-.9 2-2v-7h-2v7zM14 3v2h3.59l-9.83 9.830 1.41 1.41L19 6.41V10h2V3h-7z"/></svg><div style="position:absolute;left:645.0px;top:1398.4px;width:308.7px;height:67.0px;box-sizing:border-box;background:#fff;border:1.5px solid #c9c9c9;border-radius:10px"></div><div class="t" style="left:666.6px;top:1418.0px;font-size:26.5px;color:#a3a8b0;font-weight:400;letter-spacing:0.35px;">Select Tag</div><svg style="position:absolute;left:907.8px;top:1429.4px" width="18" height="10" viewBox="0 0 18 10"><path d="M0 0H18L9 10z" fill="#8799ae"/></svg><div class="t" style="left:975.0px;top:1419.3px;font-size:29px;color:#1f2a5e;font-weight:400;letter-spacing:0.1px;">ABC Company</div><div class="t" style="left:1416.0px;top:1417.8px;font-size:26px;color:#1a1a1a;font-weight:400;letter-spacing:0.5px;">20210521</div><div class="t" style="left:1854.6px;top:1414.6px;font-size:26px;color:#1a1a1a;font-weight:400;letter-spacing:0.15px;">Missing value</div><div class="t" style="left:2287.0px;top:1417.6px;font-size:26px;color:#1a1a1a;font-weight:400;letter-spacing:0.35px;">2023-10-22 17:00</div><div class="t" style="left:2611.0px;top:1417.6px;font-size:26px;color:#1a1a1a;font-weight:400;letter-spacing:0.35px;">2021-05-19 22:21</div><div style="position:absolute;left:413.0px;top:1589.0px;width:2513.0px;height:1.0px;background:#d9d9d9"></div><div style="position:absolute;left:441.0px;top:1521.2px;width:32.5px;height:32.5px;box-sizing:border-box;border:3.6px solid #6b6b6b;border-radius:3px"></div><svg style="position:absolute;left:548.27px;top:1514.97px;overflow:visible" width="44.27" height="42.67" viewBox="0 0 24 24" preserveAspectRatio="none"><path fill="#707070" d="M19 19H5V5h7V3H5c-1.11 0-2 .9-2 2v14c0 1.1.89 2 2 2h14c1.1 0 2-.9 2-2v-7h-2v7zM14 3v2h3.59l-9.83 9.830 1.41 1.41L19 6.41V10h2V3h-7z"/></svg><div style="position:absolute;left:645.0px;top:1503.7px;width:308.7px;height:67.0px;box-sizing:border-box;background:#fff;border:1.5px solid #c9c9c9;border-radius:10px"></div><div class="t" style="left:666.6px;top:1523.3px;font-size:26.5px;color:#a3a8b0;font-weight:400;letter-spacing:0.35px;">Select Tag</div><svg style="position:absolute;left:907.8px;top:1534.7px" width="18" height="10" viewBox="0 0 18 10"><path d="M0 0H18L9 10z" fill="#8799ae"/></svg><div class="t" style="left:977.5px;top:1517.7px;font-size:29px;color:#1f2a5e;font-weight:400;letter-spacing:0.1px;">ABC Company</div><div class="t" style="left:1416.0px;top:1522.6px;font-size:26px;color:#1a1a1a;font-weight:400;letter-spacing:0.5px;">20210128</div><div class="t" style="left:1850.0px;top:1521.4px;font-size:26px;color:#1a1a1a;font-weight:400;letter-spacing:0.15px;">New Ship To address</div><div class="t" style="left:2287.0px;top:1522.9px;font-size:26px;color:#1a1a1a;font-weight:400;letter-spacing:0.35px;">2023-10-22 17:00</div><div class="t" style="left:2611.0px;top:1522.9px;font-size:26px;color:#1a1a1a;font-weight:400;letter-spacing:0.35px;">2021-01-11 09:28</div><div style="position:absolute;left:413.0px;top:1694.0px;width:2513.0px;height:1.0px;background:#d9d9d9"></div><div style="position:absolute;left:441.0px;top:1626.5px;width:32.5px;height:32.5px;box-sizing:border-box;border:3.6px solid #6b6b6b;border-radius:3px"></div><svg style="position:absolute;left:548.27px;top:1620.27px;overflow:visible" width="44.27" height="42.67" viewBox="0 0 24 24" preserveAspectRatio="none"><path fill="#707070" d="M19 19H5V5h7V3H5c-1.11 0-2 .9-2 2v14c0 1.1.89 2 2 2h14c1.1 0 2-.9 2-2v-7h-2v7zM14 3v2h3.59l-9.83 9.830 1.41 1.41L19 6.41V10h2V3h-7z"/></svg><div style="position:absolute;left:645.0px;top:1609.0px;width:308.7px;height:67.0px;box-sizing:border-box;background:#fff;border:1.5px solid #c9c9c9;border-radius:10px"></div><div class="t" style="left:666.6px;top:1628.6px;font-size:26.5px;color:#333a45;font-weight:400;letter-spacing:0.35px;">Ignore</div><svg style="position:absolute;left:907.8px;top:1640.0px" width="18" height="10" viewBox="0 0 18 10"><path d="M0 0H18L9 10z" fill="#8799ae"/></svg><div class="t" style="left:977.5px;top:1628.5px;font-size:29px;color:#1f2a5e;font-weight:400;letter-spacing:0.1px;">ABC Company</div><div class="t" style="left:1416.0px;top:1628.5px;font-size:26px;color:#1a1a1a;font-weight:400;letter-spacing:0.5px;">20210539</div><div class="t" style="left:1851.3px;top:1627.2px;font-size:26px;color:#1a1a1a;font-weight:400;letter-spacing:0.15px;">Missing value</div><div class="t" style="left:2287.0px;top:1628.2px;font-size:26px;color:#1a1a1a;font-weight:400;letter-spacing:0.35px;">2023-10-22 17:00</div><div class="t" style="left:2611.0px;top:1628.2px;font-size:26px;color:#1a1a1a;font-weight:400;letter-spacing:0.35px;">2021-05-19 21:39</div><div style="position:absolute;left:413.0px;top:1711.0px;width:2513.0px;height:1.0px;background:#d9d9d9"></div><div class="t" style="left:2172.1px;top:1748.4px;font-size:24px;color:#3e4654;font-weight:400;letter-spacing:1.5px;">20 rows</div><svg style="position:absolute;left:2280px;top:1757px" width="17.3" height="9" viewBox="0 0 17.3 9"><path d="M0 0H17.3L8.65 9z" fill="#3e4654"/></svg><div class="t" style="left:2382.2px;top:1746.7px;font-size:24px;color:#1a1a1a;font-weight:400;letter-spacing:1.0px;">1-20 of 27</div><div style="position:absolute;left:2555.2px;top:1737.5px;width:55.4px;height:46.2px;box-sizing:border-box;border:1.5px solid #dedede;border-radius:10px;background:#fff"></div><svg style="position:absolute;left:2574px;top:1748px" width="18" height="25" viewBox="0 0 18 25"><path d="M13.5 2.4 L3.5 12.4 L13.5 22.4" fill="none" stroke="#bdbdbd" stroke-width="2.4"/></svg><div class="t" style="left:2622.7px;top:1748.2px;font-size:24.5px;color:#1a1a1a;font-weight:400;letter-spacing:0.4px;">Page</div><div style="position:absolute;left:2692.5px;top:1737.5px;width:82.0px;height:46.2px;box-sizing:border-box;border:1.5px solid #c7c7c7;border-radius:10px;background:#fff"></div><div class="t" style="left:2716.0px;top:1748.2px;font-size:24.5px;color:#3e4654;font-weight:400;letter-spacing:0px;">1</div><div class="t" style="left:2786.6px;top:1748.2px;font-size:24.5px;color:#1a1a1a;font-weight:400;letter-spacing:0.4px;">of 2</div><div style="position:absolute;left:2842.0px;top:1737.5px;width:55.4px;height:46.2px;box-sizing:border-box;border:1.5px solid #c7c7c7;border-radius:10px;background:#fff"></div><svg style="position:absolute;left:2861px;top:1748px" width="18" height="25" viewBox="0 0 18 25"><path d="M4.2 2.4 L14.2 12.4 L4.2 22.4" fill="none" stroke="#3e4654" stroke-width="2.4"/></svg><div style="position:absolute;left:415.0px;top:529.0px;width:118px;height:118px;border-radius:50%;background:#fd5a4b;box-shadow:1px 4px 4px rgba(0,0,0,0.65)"></div><svg style="position:absolute;left:0;top:0;overflow:visible" width="1" height="1"><path fill="#fff" d="M470.8 562.1 H479.4 V616.3 H470.8 V577.9 H458.8 V572.3 C466 572 470 568 470.8 562.1 Z"/></svg><div style="position:absolute;left:836.5px;top:529.0px;width:118px;height:118px;border-radius:50%;background:#fd5a4b;box-shadow:1px 4px 4px rgba(0,0,0,0.65)"></div><div class="t" style="left:795.3px;top:552.6px;width:200px;text-align:center;font-size:77px;color:#fff">2</div><div style="position:absolute;left:1194.0px;top:433.0px;width:118px;height:118px;border-radius:50%;background:#fd5a4b;box-shadow:1px 4px 4px rgba(0,0,0,0.65)"></div><div class="t" style="left:1152.1px;top:456.2px;width:200px;text-align:center;font-size:77px;color:#fff">3</div><div style="position:absolute;left:1719.0px;top:633.0px;width:118px;height:118px;border-radius:50%;background:#fd5a4b;box-shadow:1px 4px 4px rgba(0,0,0,0.65)"></div><div class="t" style="left:1676.9px;top:655.3px;width:200px;text-align:center;font-size:77px;color:#fff">4</div><div style="position:absolute;left:1974.0px;top:236.3px;width:118px;height:118px;border-radius:50%;background:#fd5a4b;box-shadow:1px 4px 4px rgba(0,0,0,0.65)"></div><div class="t" style="left:1932.6px;top:259.2px;width:200px;text-align:center;font-size:77px;color:#fff">5</div><div style="position:absolute;left:2087.0px;top:1626.6px;width:118px;height:118px;border-radius:50%;background:#fd5a4b;box-shadow:1px 4px 4px rgba(0,0,0,0.65)"></div><div class="t" style="left:2044.7px;top:1650.0px;width:200px;text-align:center;font-size:77px;color:#fff">9</div><div style="position:absolute;left:2543.0px;top:1626.6px;width:118px;height:118px;border-radius:50%;background:#fd5a4b;box-shadow:1px 4px 4px rgba(0,0,0,0.65)"></div><div class="t" style="left:2503.3px;top:1650.0px;width:200px;text-align:center;font-size:77px;color:#fff">10</div><svg style="position:absolute;left:0;top:0;overflow:visible" width="1" height="1"><ellipse cx="2545.9" cy="164.3" rx="64.8" ry="59.4" fill="#fd5a4b"/><path d="M2575.9 219.2 L2668 281.8 L2603.6 195.6 L2545.9 164.3z" fill="#fd5a4b"/></svg><div class="t" style="left:2448.3px;top:122.7px;width:200px;text-align:center;font-size:81px;color:#fff">6</div><svg style="position:absolute;left:0;top:0;overflow:visible" width="1" height="1"><ellipse cx="2692.7" cy="164.4" rx="65.7" ry="61.4" fill="#fd5a4b"/><path d="M2715.3 223.3 L2788 286.9 L2745 202.8 L2692.7 164.4z" fill="#fd5a4b"/></svg><div class="t" style="left:2596.2px;top:120.6px;width:200px;text-align:center;font-size:81px;color:#fff">7</div><svg style="position:absolute;left:0;top:0;overflow:visible" width="1" height="1"><ellipse cx="2841" cy="161.6" rx="68" ry="60.7" fill="#fd5a4b"/><path d="M2843.5 222.3 L2882.5 286.3 L2875.3 216 L2841 161.6z" fill="#fd5a4b"/></svg><div class="t" style="left:2743.0px;top:118.6px;width:200px;text-align:center;font-size:81px;color:#fff">8</div>
</div>
</body></html>
